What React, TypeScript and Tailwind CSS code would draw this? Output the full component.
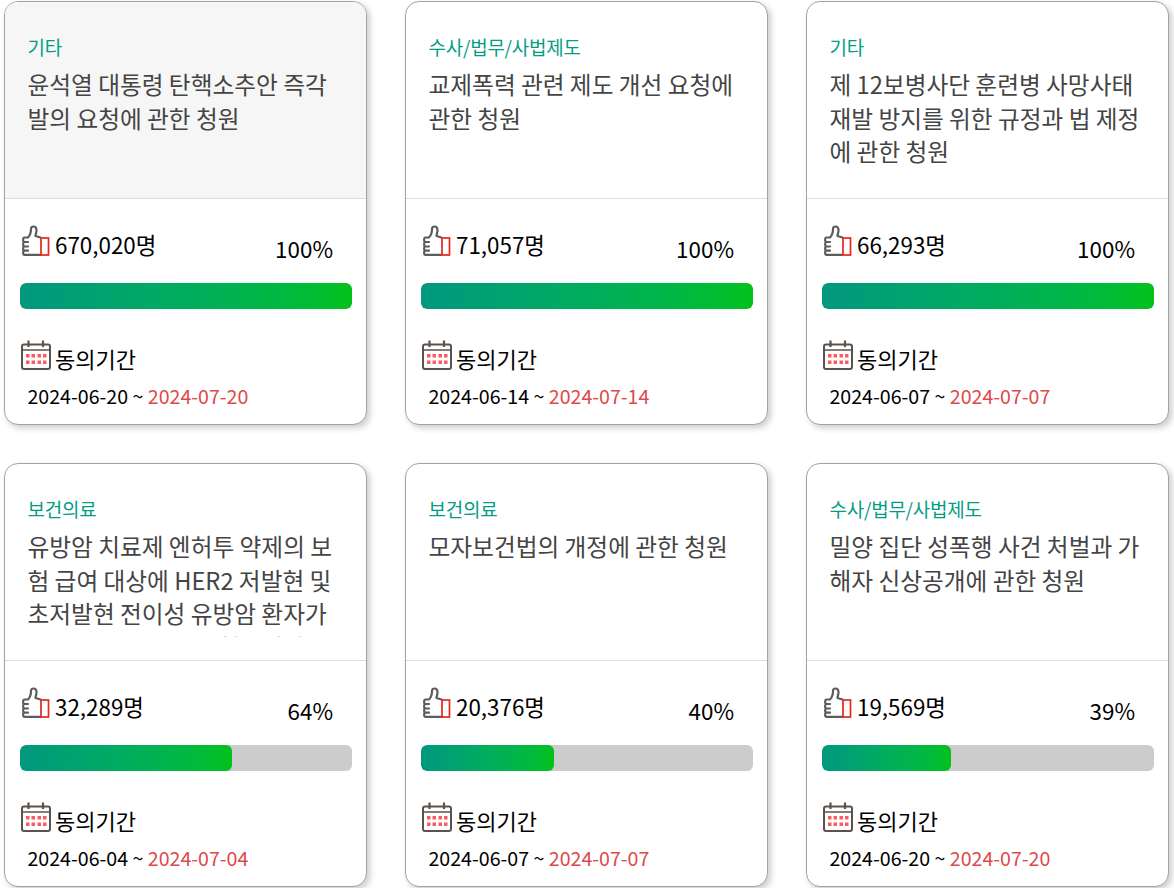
const cards = [
  { cat: "기타", title: "윤석열 대통령 탄핵소추안 즉각 발의 요청에 관한 청원", count: "670,020명", pct: 100, from: "2024-06-20", to: "2024-07-20", hover: true },
  { cat: "수사/법무/사법제도", title: "교제폭력 관련 제도 개선 요청에 관한 청원", count: "71,057명", pct: 100, from: "2024-06-14", to: "2024-07-14" },
  { cat: "기타", title: "제 12보병사단 훈련병 사망사태 재발 방지를 위한 규정과 법 제정에 관한 청원", count: "66,293명", pct: 100, from: "2024-06-07", to: "2024-07-07" },
  { cat: "보건의료", title: "유방암 치료제 엔허투 약제의 보험 급여 대상에 HER2 저발현 및 초저발현 전이성 유방암 환자가 포함될 수 있도록 요청합니다", count: "32,289명", pct: 64, from: "2024-06-04", to: "2024-07-04" },
  { cat: "보건의료", title: "모자보건법의 개정에 관한 청원", count: "20,376명", pct: 40, from: "2024-06-07", to: "2024-07-07" },
  { cat: "수사/법무/사법제도", title: "밀양 집단 성폭행 사건 처벌과 가해자 신상공개에 관한 청원", count: "19,569명", pct: 39, from: "2024-06-20", to: "2024-07-20" },
];

function Thumb() {
  return (
    <svg width="29" height="34" viewBox="0 0 29 34" className="ml-px mt-px shrink-0" fill="none">
      <path d="M7 12.5 C9 10.5 10 8 10 4 C10 2 11 1.5 12.5 1.5 C14.5 1.5 15.5 3 15.5 5.5 C15.5 8 14.5 9 14.5 11 L19.5 12.5 M19.5 29.8 H7 M7 12.5 H3.5 C1.7 12.5 1.7 17 3.5 17 H7 M3.5 17 C1.7 17 1.7 21.5 3.5 21.5 H7 M3.5 21.5 C1.7 21.5 1.7 25.7 3.5 25.7 H7 M3.5 25.7 C1.7 25.7 1.7 29.8 3.5 29.8 H7" stroke="#5c5c5c" strokeWidth="2.2" strokeLinecap="round" strokeLinejoin="round" />
      <rect x="20" y="13" width="7.5" height="17" stroke="#e8251b" strokeWidth="1.7" fill="#fff" />
    </svg>
  );
}

function Cal() {
  return (
    <svg width="30" height="30" viewBox="0 0 30 30" className="ml-px shrink-0" fill="none">
      <rect x="1" y="4.5" width="28" height="24.5" rx="2" stroke="#5a524c" strokeWidth="2" />
      <path d="M1 10 H29" stroke="#5a524c" strokeWidth="1.6" />
      <path d="M7.5 0.5 V7 M22 0.5 V7" stroke="#5a524c" strokeWidth="2.2" />
      {[14, 20.5].map((y) =>
        [5, 10.5, 16.5, 22].map((x) => <rect key={`${x}-${y}`} x={x} y={y} width="3.5" height="3.5" fill="#fb5b5f" />)
      )}
    </svg>
  );
}

export default function App() {
  return (
    <div className="w-[1174px] h-[888px] overflow-hidden bg-white pl-[4px] pt-px font-['Noto_Sans_CJK_KR','Noto_Sans',sans-serif]">
      <div className="grid grid-cols-[363px_363px_363px] gap-x-[38px] gap-y-[38px]">
        {cards.map((c, i) => (
          <div key={i} className="h-[424px] rounded-[14px] border border-[#a3a3a3] bg-white shadow-[3px_3px_6px_rgba(0,0,0,0.2)] overflow-hidden">
            <div className={`h-[197px] border-b border-[#dddddd] px-[22.5px] pt-[31px] overflow-hidden ${c.hover ? "bg-[#f6f6f6]" : ""}`}>
              <div className="text-[19px] leading-[28px] tracking-[-0.25px] text-[#049d83]">{c.cat}</div>
              <div className="mt-[7px] h-[107px] overflow-hidden text-[23.7px] leading-[33.6px] text-[#444444]">{c.title}</div>
            </div>
            <div className="pl-[15px] pr-[14px]">
              <div className="mt-[25px] flex h-[34px] items-start">
                <Thumb />
                <span className="mt-[4px] ml-[5px] text-[22.4px] leading-[32px] text-black">{c.count}</span>
                <span className="ml-auto mr-[19px] mt-[8px] text-[22.4px] leading-[32px] text-black">{c.pct}%</span>
              </div>
              <div className="mt-[25px] h-[26px] rounded-[6px] bg-[#cccccc] overflow-hidden">
                <div className="h-full rounded-[6px] bg-gradient-to-r from-[#02987e] to-[#03c118]" style={{ width: `${c.pct}%` }} />
              </div>
              <div className="mt-[31px] flex items-start">
                <Cal />
                <span className="ml-[4px] text-[22px] leading-[36px] text-black">동의기간</span>
              </div>
              <div className="mt-[5px] pl-[7.5px] text-[19.6px] leading-[30px] text-black">
                {c.from} ~ <span className="text-[#dd4a4a]">{c.to}</span>
              </div>
            </div>
          </div>
        ))}
      </div>
    </div>
  );
}
